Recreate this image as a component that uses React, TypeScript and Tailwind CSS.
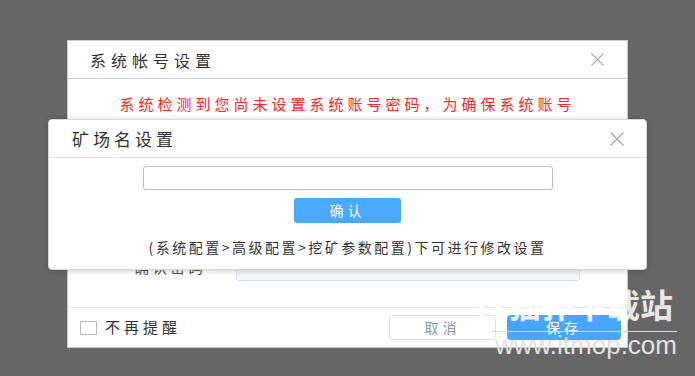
import React from 'react';

const font = { fontFamily: '"Noto Sans CJK SC", "Noto Sans", sans-serif' };

const CloseIcon: React.FC<{ size?: number }> = ({ size = 15 }) => (
  <svg width={size} height={size} viewBox="0 0 16 16" fill="none">
    <path d="M1.5 1.5 L14.5 14.5 M14.5 1.5 L1.5 14.5" stroke="#a8a8a8" strokeWidth="1.3" />
  </svg>
);

const BackDialog: React.FC = () => (
  <div className="absolute left-[67px] top-[40px] w-[561px] h-[308px] bg-white border border-[#c9c9c9] flex flex-col">
    <div className="h-[38px] shrink-0 flex items-center justify-between pl-[22px] pr-[22px] border-b border-[#cfcfcf]">
      <span className="text-[16px] tracking-[5px] text-[#333]">系统帐号设置</span>
      <CloseIcon />
    </div>
    <div className="flex-1 flex flex-col">
      <p className="mt-[15px] text-center text-[15px] leading-[20px] tracking-[4px] text-[#ff2626]">
        系统检测到您尚未设置系统账号密码，为确保系统账号
      </p>
      <div className="flex-1" />
      <div className="flex items-end pb-[26px]">
        <span className="mb-[6px] w-[150px] pr-[12px] text-right text-[15px] leading-[16px] tracking-[3px] text-[#555]">确认密码</span>
        <div className="ml-[18px] w-[344px] h-[20px] rounded-[3px] bg-[#f5f7fa] border border-[#dcdfe6]" />
      </div>
    </div>
    <div className="h-[40px] shrink-0 border-t border-[#e6e6e6] flex items-center pl-[12px] pr-[6px]">
      <div className="w-[17px] h-[14px] border border-[#b8b8b8] bg-white" />
      <span className="ml-[8px] text-[15px] tracking-[4px] text-[#333]">不再提醒</span>
      <div className="flex-1" />
      <button className="w-[107px] h-[25px] rounded-[4px] border border-[#dcdfe6] bg-white text-[14px] tracking-[4px] text-[#8d9aa6]">
        取消
      </button>
      <button className="ml-[11px] w-[114px] h-[25px] rounded-[4px] bg-[#48a6ff] text-[14px] tracking-[4px] text-white">
        保存
      </button>
    </div>
  </div>
);

const FrontDialog: React.FC = () => (
  <div className="absolute left-[48px] top-[119px] w-[599px] h-[151px] rounded-[4px] bg-white border border-[#d8d8d8] shadow-[0_1px_6px_rgba(0,0,0,0.2)] flex flex-col">
    <div className="h-[38px] shrink-0 flex items-center justify-between pl-[23px] pr-[21px] border-b border-[#e4e4e4]">
      <span className="text-[17px] tracking-[4px] text-[#333]">矿场名设置</span>
      <CloseIcon size={16} />
    </div>
    <div className="flex flex-col items-center">
      <div className="mt-[8px] w-[410px] h-[24px] rounded-[3px] border border-[#bdbdbd] bg-white" />
      <button className="mt-[8px] w-[107px] h-[25px] rounded-[3px] bg-[#4aa8ff] text-[14px] tracking-[4px] text-white">
        确认
      </button>
      <p className="mt-[14px] text-[14px] leading-[20px] tracking-[2.5px] text-[#333]">
        (系统配置&gt;高级配置&gt;挖矿参数配置)下可进行修改设置
      </p>
    </div>
  </div>
);

const Watermark: React.FC = () => (
  <div className="absolute right-[18px] top-[281px] pointer-events-none flex flex-col items-end">
    <span className="pr-[4px] whitespace-nowrap text-[33px] leading-[46px] font-bold text-white/85">IT猫扑下载站</span>
    <div className="mt-[4px] w-[186px] h-px bg-[#d8d8d8]" />
    <span
      className="whitespace-nowrap text-[26px] leading-[26px] text-[#e2e2e2]"
      style={{ fontFamily: '"Liberation Sans", Arial, sans-serif' }}
    >
      www.itmop.com
    </span>
  </div>
);

export default function App() {
  return (
    <div className="relative w-[695px] h-[376px] bg-[#666666] overflow-hidden" style={font}>
      <BackDialog />
      <FrontDialog />
      <Watermark />
    </div>
  );
}
